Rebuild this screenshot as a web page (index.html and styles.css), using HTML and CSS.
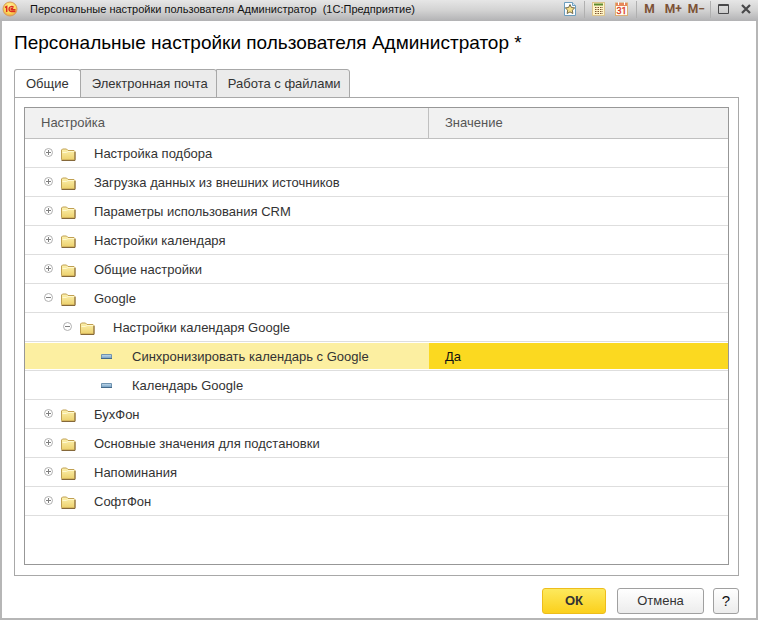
FILE: index.html
```html
<!DOCTYPE html>
<html lang="ru">
<head>
<meta charset="utf-8">
<title>Персональные настройки пользователя</title>
<link rel="stylesheet" href="styles.css">
</head>
<body>
<svg class="defs" aria-hidden="true">
  <defs>
    <linearGradient id="gold" x1="0" y1="0" x2="0" y2="1"><stop offset="0" stop-color="#fdf2b0"/><stop offset="1" stop-color="#ecd06c"/></linearGradient>
    <linearGradient id="steel" x1="0" y1="0" x2="0" y2="1"><stop offset="0" stop-color="#c5dcee"/><stop offset="1" stop-color="#6f9cc0"/></linearGradient>
    <radialGradient id="logo" cx=".5" cy=".35" r=".65"><stop offset="0" stop-color="#fff6a8"/><stop offset=".7" stop-color="#fbd552"/><stop offset="1" stop-color="#e9a04a"/></radialGradient>
  </defs>
  <symbol id="plus" viewBox="0 0 9 9"><circle cx="4.500" cy="4.500" r="4" fill="#fff" stroke="#b0b0b0"/><path d="M2 4.500h5M4.500 2v5" stroke="#808080"/></symbol>
  <symbol id="minus" viewBox="0 0 9 9"><circle cx="4.500" cy="4.500" r="4" fill="#fff" stroke="#b0b0b0"/><path d="M2 4.500h5" stroke="#808080"/></symbol>
  <symbol id="folder" viewBox="0 0 15 13"><path d="M.5 11.500v-9.500l1-1h4l1.500 1.500h6l1 1v8l-.5 .5h-12.500z" fill="url(#gold)" stroke="#c0a052"/><path d="M1.500 4.500h4l1.500-1h6" fill="none" stroke="#fff8cf"/><path d="M.5 12.500h13.500v-8.500" fill="none" stroke="#85683a"/></symbol>
  <symbol id="item" viewBox="0 0 11 5"><path d="M.5 .5h10v4h-10z" fill="url(#steel)" stroke="#6f93b0"/><path d="M0 4.500h11" stroke="#44698a"/></symbol>
</svg>
<header class="titlebar">
  <svg class="logo" viewBox="0 0 16 16"><circle cx="8" cy="8" r="7" fill="url(#logo)" stroke="#d99a5b"/><path d="M3 6.500l1.700-1v5.500M11.500 6.500c-1-1.500-4.500-1.300-4.500 1.500s2 2.700 6.500 2.500M11 8c-1-.8-2-.6-2 .1s1 .6 4.500 .6" fill="none" stroke="#dc2d20" stroke-width="1.500"/></svg>
  <span class="caption">Персональные настройки пользователя Администратор&nbsp; (1С:Предприятие)</span>
  <div class="tools">
    <button class="tool" aria-label="Избранное"><svg width="12" height="14" viewBox="0 0 12 14"><path d="M.5 .5h8l3 3v10h-11z" fill="#fafdff" stroke="#6c9dbd"/><path d="M8.500 .5v3h3" fill="#d6eaf5" stroke="#6c9dbd"/><path d="M6 2.500l1.400 3 3.300.4-2.400 2.300.6 3.300-2.900-1.600-2.900 1.600.6-3.300-2.400-2.300 3.300-.4z" fill="#f5df88" stroke="#655c3c" stroke-width=".9"/></svg></button>
    <i class="sep"></i>
    <button class="tool" aria-label="Калькулятор"><svg width="13" height="14" viewBox="0 0 13 14"><rect x=".5" y=".5" width="12" height="13" fill="#fff4c6" stroke="#dcc48c"/><path d="M2 2.500h9" stroke="#5d8a2d" stroke-width="2"/><path d="M3 5.500h8M3 7.500h8M3 9.500h8M3 11.500h8" stroke="#805430" stroke-dasharray="1.500 1"/></svg></button>
    <button class="tool calendar" aria-label="Календарь"><svg width="13" height="14" viewBox="0 0 13 14"><rect x=".5" y="1" width="12" height="12.500" fill="#fffdf1" stroke="#dcae74"/><path d="M1 2.500h11" stroke="#e68759" stroke-width="3"/><path d="M3.500 0v3M9.500 0v3" stroke="#fff"/><text x="6.500" y="12" text-anchor="middle">31</text></svg></button>
    <i class="sep"></i>
    <button class="tool memory">M</button>
    <button class="tool memory">M+</button>
    <button class="tool memory">M−</button>
    <i class="sep narrow"></i>
    <button class="tool" aria-label="Развернуть"><svg width="11" height="10" viewBox="0 0 11 10"><path d="M.5 .5h10v9h-10zM0 1.500h11" fill="none" stroke="#48484a"/></svg></button>
    <button class="tool close" aria-label="Закрыть"><svg width="10" height="10" viewBox="0 0 10 10"><path d="M1 1l8 8M9 1l-8 8" stroke="#48484a" stroke-width="2.200"/></svg></button>
  </div>
</header>
<main class="form">
  <h1>Персональные настройки пользователя Администратор *</h1>
  <div class="tabs" role="tablist">
    <button class="tab active" role="tab" aria-selected="true">Общие</button>
    <button class="tab" role="tab" aria-selected="false">Электронная почта</button>
    <button class="tab" role="tab" aria-selected="false">Работа с файлами</button>
  </div>
  <section class="panel">
    <div class="grid">
      <table>
        <colgroup><col class="name"><col></colgroup>
        <thead><tr><th>Настройка</th><th>Значение</th></tr></thead>
        <tbody>
          <tr><td><div class="node"><svg class="toggle"><use href="#plus"/></svg><svg class="folder"><use href="#folder"/></svg>Настройка подбора</div></td><td></td></tr>
          <tr><td><div class="node"><svg class="toggle"><use href="#plus"/></svg><svg class="folder"><use href="#folder"/></svg>Загрузка данных из внешних источников</div></td><td></td></tr>
          <tr><td><div class="node"><svg class="toggle"><use href="#plus"/></svg><svg class="folder"><use href="#folder"/></svg>Параметры использования CRM</div></td><td></td></tr>
          <tr><td><div class="node"><svg class="toggle"><use href="#plus"/></svg><svg class="folder"><use href="#folder"/></svg>Настройки календаря</div></td><td></td></tr>
          <tr><td><div class="node"><svg class="toggle"><use href="#plus"/></svg><svg class="folder"><use href="#folder"/></svg>Общие настройки</div></td><td></td></tr>
          <tr><td><div class="node"><svg class="toggle"><use href="#minus"/></svg><svg class="folder"><use href="#folder"/></svg>Google</div></td><td></td></tr>
          <tr><td><div class="node level2"><svg class="toggle"><use href="#minus"/></svg><svg class="folder"><use href="#folder"/></svg>Настройки календаря Google</div></td><td></td></tr>
          <tr class="selected"><td><div class="node level3"><svg class="item"><use href="#item"/></svg>Синхронизировать календарь с Google</div></td><td>Да</td></tr>
          <tr><td><div class="node level3"><svg class="item"><use href="#item"/></svg>Календарь Google</div></td><td></td></tr>
          <tr><td><div class="node"><svg class="toggle"><use href="#plus"/></svg><svg class="folder"><use href="#folder"/></svg>БухФон</div></td><td></td></tr>
          <tr><td><div class="node"><svg class="toggle"><use href="#plus"/></svg><svg class="folder"><use href="#folder"/></svg>Основные значения для подстановки</div></td><td></td></tr>
          <tr><td><div class="node"><svg class="toggle"><use href="#plus"/></svg><svg class="folder"><use href="#folder"/></svg>Напоминания</div></td><td></td></tr>
          <tr><td><div class="node"><svg class="toggle"><use href="#plus"/></svg><svg class="folder"><use href="#folder"/></svg>СофтФон</div></td><td></td></tr>
        </tbody>
      </table>
    </div>
  </section>
  <footer class="actions">
    <button class="btn primary">ОК</button>
    <button class="btn cancel">Отмена</button>
    <button class="btn help">?</button>
  </footer>
</main>
</body>
</html>
```
FILE: styles.css
```css
* { box-sizing: border-box; }
body {
  margin: 0;
  min-height: 100vh;
  display: flex;
  flex-direction: column;
  font: 13px/16px "Liberation Sans", Arial, sans-serif;
  color: #333;
  background: #fff;
}
button { font: inherit; color: inherit; margin: 0; }
.defs { position: absolute; width: 0; height: 0; }

.titlebar {
  display: flex;
  align-items: center;
  height: 21px;
  padding: 0 7px 3px 2px;
  background: linear-gradient(#e6e6e6, #d2d2d2 50%, #b2b2b4);
}
.logo { width: 16px; height: 16px; margin-right: 12px; }
.caption { flex: 1; font-size: 11px; color: #111; white-space: nowrap; }
.tools { display: flex; align-items: center; }
.tool { display: flex; align-items: center; padding: 0; border: 0; background: none; }
.tool svg { display: block; }
.sep { width: 1px; height: 17px; margin: 0 7px 0 8px; background: #b0b0b0; }
.sep.narrow { margin-left: 5px; }
.calendar { margin-left: 10px; }
.calendar text { font: 9px Roboto, sans-serif; fill: #d8341f; stroke: #d8341f; stroke-width: .3px; }
.memory { font: bold 12px/16px Roboto, sans-serif; color: #7d5236; }
.memory + .memory { margin-left: 10px; }
.memory + .memory + .memory { margin-left: 6px; }
.close { margin-left: 12px; }

.form {
  flex: 1;
  display: flex;
  flex-direction: column;
  padding: 10px 17px 4px 12px;
  border: solid #b6b6b6;
  border-width: 0 2px 2px;
}
h1 { margin: 0 0 14px; font-size: 19px; line-height: 24px; font-weight: 400; color: #000; white-space: nowrap; }

.tabs { display: flex; margin-bottom: -1px; }
.tab {
  height: 29px;
  padding: 0 8px 0 11px;
  border: 1px solid #a8a8a8;
  margin-left: -1px;
  border-radius: 0 3px 0 0;
  background: #ebebeb;
}
.tab.active { margin-left: 0; padding: 0 11px; border-radius: 3px 3px 0 0; border-bottom-color: #fff; background: #fff; }

.panel { flex: 1; display: flex; padding: 9px 9px 10px; border: 1px solid #a8a8a8; }
.grid { flex: 1; border: 1px solid #979797; }
table { width: 100%; table-layout: fixed; border-collapse: separate; border-spacing: 0; }
.name { width: 404px; }
th { height: 31px; padding: 0 16px; font-weight: 400; text-align: left; color: #555; background: #f1f1f1; border-bottom: 1px solid #c0c0c0; }
th:first-child { border-right: 1px solid #c0c0c0; }
td { height: 29px; padding: 2px 16px 0; border-bottom: 1px solid #dedede; }
.node { display: flex; align-items: center; white-space: nowrap; padding-left: 3px; }
.level2 { padding-left: 22px; }
.level3 { padding-left: 60px; }
.toggle { width: 9px; height: 9px; margin: 0 8px 3px 0; }
.folder { width: 15px; height: 13px; margin-right: 18px; }
.item { width: 11px; height: 5px; margin: 0 20px 1px 0; }
.selected td { padding-top: 0; background: #fcefa1; border-top: 1px solid #fff; box-shadow: inset 0 -1px #fff; }
.selected td + td { background: #fbd920; color: #111; }

.actions { display: flex; justify-content: flex-end; margin-top: 12px; }
.btn { height: 26px; padding: 0; border: 1px solid #a0a0a0; border-radius: 3px; background: linear-gradient(#fff, #ececec); }
.primary { width: 64px; margin-right: 11px; font-weight: 700; border-color: #edbd1c; background: linear-gradient(#fde95d, #fbd01c); }
.cancel { width: 87px; margin-right: 9px; }
.help { width: 26px; font-size: 15px; color: #111; }
```
